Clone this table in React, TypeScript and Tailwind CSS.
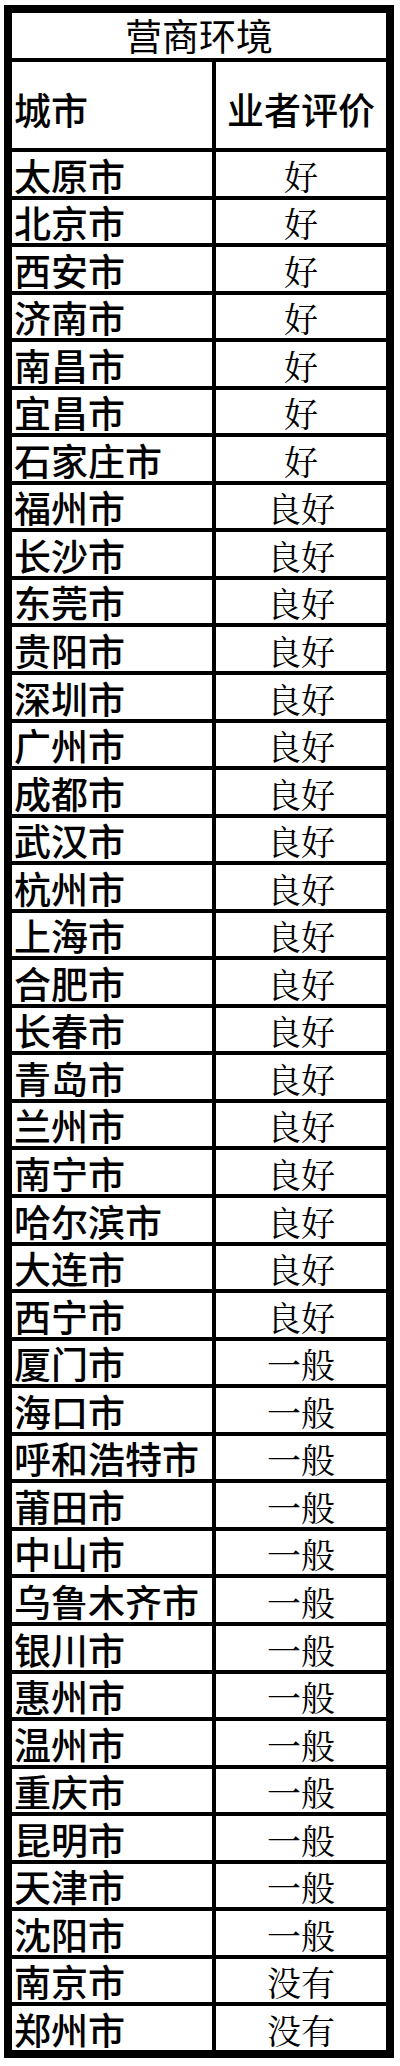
import React from "react";

const rows: [string, string][] = [
  ["太原市", "好"],
  ["北京市", "好"],
  ["西安市", "好"],
  ["济南市", "好"],
  ["南昌市", "好"],
  ["宜昌市", "好"],
  ["石家庄市", "好"],
  ["福州市", "良好"],
  ["长沙市", "良好"],
  ["东莞市", "良好"],
  ["贵阳市", "良好"],
  ["深圳市", "良好"],
  ["广州市", "良好"],
  ["成都市", "良好"],
  ["武汉市", "良好"],
  ["杭州市", "良好"],
  ["上海市", "良好"],
  ["合肥市", "良好"],
  ["长春市", "良好"],
  ["青岛市", "良好"],
  ["兰州市", "良好"],
  ["南宁市", "良好"],
  ["哈尔滨市", "良好"],
  ["大连市", "良好"],
  ["西宁市", "良好"],
  ["厦门市", "一般"],
  ["海口市", "一般"],
  ["呼和浩特市", "一般"],
  ["莆田市", "一般"],
  ["中山市", "一般"],
  ["乌鲁木齐市", "一般"],
  ["银川市", "一般"],
  ["惠州市", "一般"],
  ["温州市", "一般"],
  ["重庆市", "一般"],
  ["昆明市", "一般"],
  ["天津市", "一般"],
  ["沈阳市", "一般"],
  ["南京市", "没有"],
  ["郑州市", "没有"],
];

const sans = "font-['Noto_Sans_CJK_SC',sans-serif]";
const serif = "font-['Noto_Serif_CJK_SC','Noto_Sans_CJK_SC',serif]";

export default function App() {
  return (
    <div className="w-[400px] min-h-[2066px] bg-white pt-[5px] pl-[4px]">
      <div className="w-[390px] border-8 border-black bg-white text-black">
        <div
          className={`h-[45px] flex items-end justify-center text-[37px] leading-[37px] pb-[4px] ${sans} font-normal`}
        >
          营商环境
        </div>
        <div className="h-[90px] border-t-4 border-black flex">
          <div
            className={`w-[200px] flex items-center pl-[2px] pt-[8px] text-[37px] leading-[37px] font-medium ${sans}`}
          >
            城市
          </div>
          <div
            className={`flex-1 border-l-4 border-black flex items-center justify-center pt-[8px] text-[37px] leading-[37px] font-medium ${sans}`}
          >
            业者评价
          </div>
        </div>
        {rows.map(([city, rating]) => (
          <div key={city} className="h-[47.55px] border-t-4 border-black flex">
            <div
              className={`w-[200px] flex items-end pl-[2px] pb-[2px] text-[37px] leading-[37px] whitespace-nowrap font-medium ${sans}`}
            >
              {city}
            </div>
            <div
              className={`flex-1 border-l-4 border-black flex items-end justify-center pb-[2px] text-[34px] leading-[36px] font-normal ${serif}`}
            >
              {rating}
            </div>
          </div>
        ))}
      </div>
    </div>
  );
}
